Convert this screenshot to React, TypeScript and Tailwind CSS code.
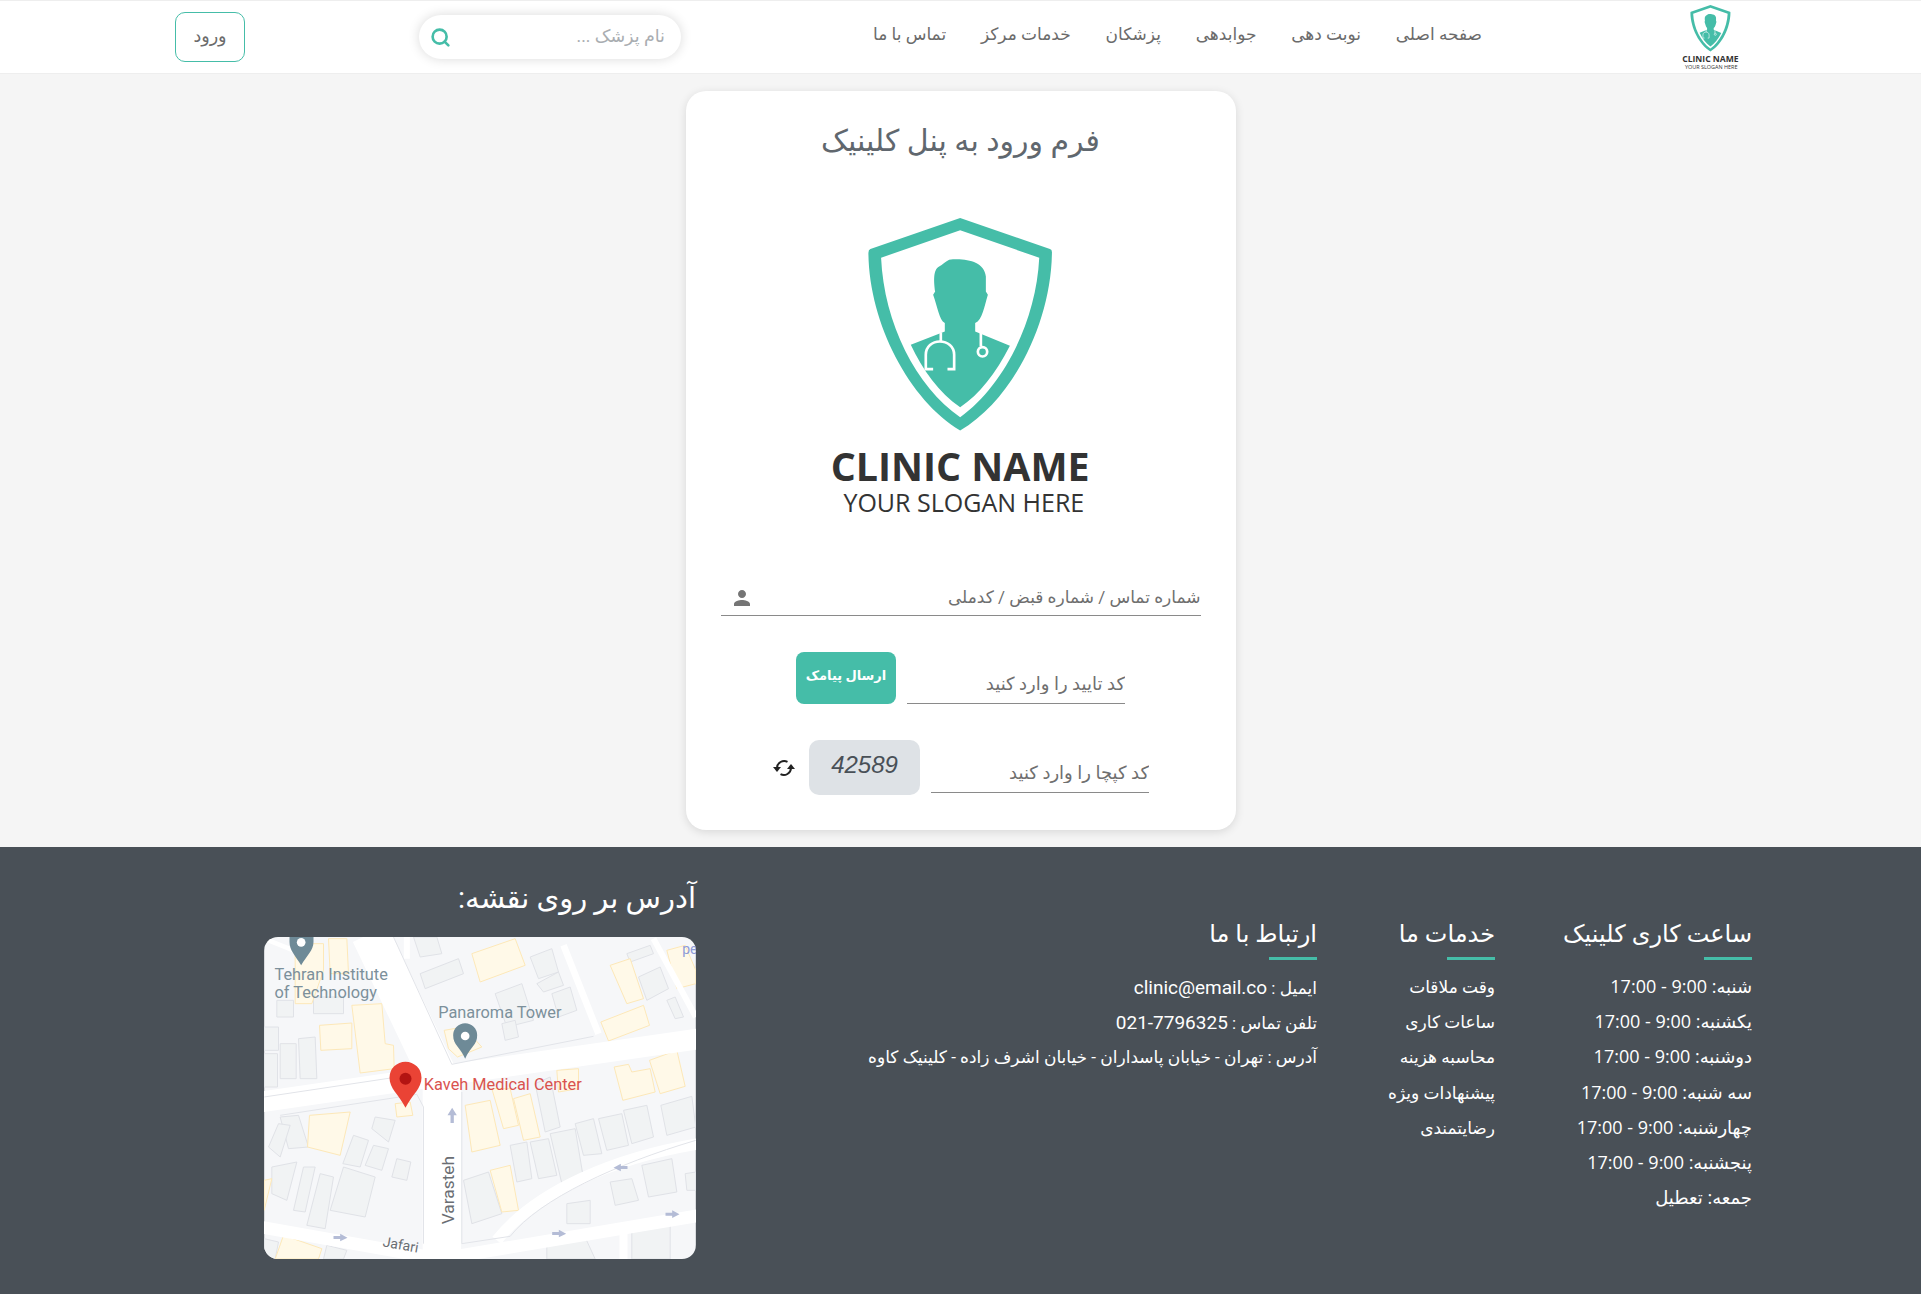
import { Search } from 'lucide-react'

const FONT = "font-['Roboto','DejaVu_Sans',sans-serif]"

const NAV = ['صفحه اصلی', 'نوبت دهی', 'جوابدهی', 'پزشکان', 'خدمات مرکز', 'تماس با ما']

const HOURS = [
  'شنبه: 9:00 - 17:00',
  'یکشنبه: 9:00 - 17:00',
  'دوشنبه: 9:00 - 17:00',
  'سه شنبه: 9:00 - 17:00',
  'چهارشنبه: 9:00 - 17:00',
  'پنجشنبه: 9:00 - 17:00',
  'جمعه: تعطیل',
]

const SERVICES = ['وقت ملاقات', 'ساعات کاری', 'محاسبه هزینه', 'پیشنهادات ویژه', 'رضایتمندی']

function Logo({ className }: { className: string }) {
  return (
    <svg viewBox="129 70 830 920" direction="ltr" className={className}>
      <path
        fillRule="evenodd"
        fill="#45bda8"
        d="M543 85 L812 178 Q819 180 818 190 C815 400 700 630 543 722 C390 630 270 400 268 190 Q268 180 274 178 Z M543 122 L780 204 C770 400 670 590 543 682 C410 590 315 400 306 204 Z"
      />
      <path
        fill="#45bda8"
        d="M395 465 L497 425 L497 400 C480 390 475 350 462 315 L468 305 C465 280 460 240 480 230 C490 225 500 215 510 210 C560 205 615 215 620 260 L620 305 L626 315 C615 350 610 390 588 400 L588 425 L692 468 C650 550 600 615 543 652 C480 610 430 540 395 465 Z"
      />
      <g fill="none" stroke="#fff" strokeWidth="8">
        <path d="M485 428 V455" />
        <path d="M462 538 H440 V495 C440 470 460 455 482 455 C505 455 525 470 525 495 V538 H505" />
        <path d="M605 428 V470" />
        <circle cx="610" cy="486" r="14" />
      </g>
      <text x="543" y="872" textAnchor="middle" fontFamily="Open Sans" fontWeight="700" fontSize="118" fill="#333">
        CLINIC NAME
      </text>
      <text x="554" y="965" textAnchor="middle" fontFamily="Open Sans" fontSize="75" fill="#333">
        YOUR SLOGAN HERE
      </text>
    </svg>
  )
}

const GRAY_BLOCKS = [
  '510,310 625,265 640,310 525,355', '840,260 905,235 925,305 865,325', '860,340 925,305 940,345 880,365',
  '735,370 815,340 850,450 770,470', '905,370 960,350 980,420 925,440', '1165,320 1230,290 1255,355 1190,390',
  '1130,250 1200,225 1210,250 1140,275', '1250,390 1275,380 1300,440 1275,445', '755,460 795,450 805,500 765,510',
  '42,470 85,470 85,540 42,540', '90,520 138,520 138,625 90,625', '145,505 195,500 200,625 150,625', '42,550 82,550 82,650 42,650',
  '80,390 130,390 130,440 80,440', '190,380 280,380 280,430 190,430', '490,200 560,200 575,250 510,260',
  '855,640 900,620 930,770 885,785', '975,760 1030,745 1055,850 1000,855', '1045,745 1115,730 1135,825 1070,840',
  '1120,720 1190,705 1210,800 1145,820', '1232,705 1325,678 1337,770 1250,795', '780,825 830,815 845,925 800,935',
  '840,815 895,805 920,915 865,925', '900,790 975,775 1000,925 935,940', '640,930 715,905 755,1030 665,1060',
  '1080,935 1145,925 1165,990 1095,1005', '1175,885 1265,865 1280,965 1195,980', '950,1000 1020,990 1020,1060 950,1060',
  '90,740 145,735 175,830 115,835', '55,830 85,760 120,765 90,860', '65,890 140,875 110,990 65,970', '130,1020 160,890 195,890 165,1025',
  '170,1065 210,910 250,920 225,1075', '240,1020 280,890 375,920 345,1040', '278,880 310,795 355,810 330,890',
  '345,885 370,825 415,835 395,900', '365,775 375,740 435,750 415,815', '425,920 440,865 482,875 470,930',
  '1145,1065 1260,1055 1260,1166 1145,1166', '890,1110 1000,1090 1035,1166 890,1166', '1305,910 1337,905 1337,960 1310,960',
  '230,1125 290,1140 280,1166 220,1166', '42,1105 85,1115 75,1166 42,1166',
]

const YELLOW_BLOCKS = [
  '665,250 795,205 825,285 690,335', '1080,285 1140,265 1180,385 1130,400', '1052,455 1180,405 1198,465 1075,512',
  '1250,240 1305,225 1337,300 1337,340 1280,355', '235,205 290,205 295,310 240,310', '135,220 220,220 220,300 185,400 135,400',
  '208,465 305,458 305,535 212,540', '305,405 395,400 405,520 430,525 432,595 330,608', '582,480 640,470 695,530 622,560 595,535',
  '920,600 985,595 985,655 925,665', '1092,590 1135,582 1145,605 1200,595 1215,665 1118,690', '1198,570 1280,540 1305,648 1230,670',
  '435,700 480,695 488,735 440,740', '645,705 720,690 750,825 665,845', '725,655 780,655 805,765 760,775',
  '790,685 840,670 870,800 820,810', '720,900 780,885 805,1020 755,1025', '178,735 300,725 270,855 172,830',
  '42,930 65,925 42,1020', '100,1095 215,1135 205,1166 75,1166',
]

function MapImage() {
  return (
    <svg viewBox="42 200 1295 966" direction="ltr" className="block h-full w-full">
      <rect x="42" y="200" width="1295" height="966" fill="#f6f7f9" />
      <g fill="#f1f3f4" stroke="#e0e2e7" strokeWidth="3">
        {GRAY_BLOCKS.map(p => (
          <polygon key={p} points={p} />
        ))}
      </g>
      <g fill="#fff9e8" stroke="#fde8b8" strokeWidth="3">
        {YELLOW_BLOCKS.map(p => (
          <polygon key={p} points={p} />
        ))}
      </g>
      <g fill="none" stroke="#fff" strokeLinecap="butt">
        <path d="M360 190 L575 640 V1180" strokeWidth="115" />
        <path d="M30 695 L480 630 L1350 505" strokeWidth="62" />
        <path d="M30 1070 L570 1166 L1350 1035" strokeWidth="38" />
        <path d="M740 1110 C860 960 1100 860 1350 820" strokeWidth="34" />
        <path d="M940 225 L1045 490" strokeWidth="20" />
        <path d="M470 200 V265" strokeWidth="18" />
        <path d="M1210 205 L1337 440" strokeWidth="18" />
        <path d="M1120 1085 V1166" strokeWidth="24" />
        <path d="M42 205 L130 240" strokeWidth="14" />
      </g>
      <g fill="none" stroke="#e2e4e9" strokeWidth="3">
        <path d="M430 200 L605 582 L1030 498" />
        <path d="M42 680 L455 618" />
        <path d="M90 735 L500 672 L520 710 V1120" />
        <path d="M635 665 V1120 L780 1098 C870 985 1100 880 1337 810" />
      </g>
      <path d="M153 285 C135 255 118 240 118 215 V200 H190 V215 C190 240 170 255 153 285 Z" fill="#6e8a97" />
      <circle cx="153" cy="216" r="13" fill="#fff" />
      <path d="M645 565 C630 530 609 525 609 495 A36 36 0 0 1 681 495 C681 525 660 530 645 565 Z" fill="#6e8a97" />
      <circle cx="645" cy="497" r="13" fill="#fff" />
      <path d="M466 712 C445 670 418 655 418 622 A47 47 0 0 1 514 622 C514 655 487 670 466 712 Z" fill="#ea4335" />
      <circle cx="466" cy="625" r="18" fill="#b31412" />
      <g fontFamily="Roboto" fontSize="49">
        <text x="73" y="329" fill="#7c909b">Tehran Institute</text>
        <text x="73" y="382" fill="#7c909b">of Technology</text>
        <text x="564" y="444" fill="#7c909b">Panaroma Tower</text>
        <text x="521" y="658" fill="#d9534f">Kaveh Medical Center</text>
        <text transform="translate(610 1062) rotate(-90)" fill="#6a6e73" fontSize="52">Varasteh</text>
        <text transform="translate(396 1128) rotate(10)" fill="#6a6e73" fontSize="42">Jafari</text>
        <text x="1296" y="250" fill="#8e9bd8" fontSize="42">pe</text>
      </g>
      <g fill="#b4bcd6">
        <path d="M606 712 L620 735 H611 V758 H601 V735 H592 Z" />
        <path d="M1090 892 L1112 880 V887 H1132 V896 H1112 V903 Z" />
        <path d="M292 1102 L270 1090 V1097 H250 V1106 H270 V1113 Z" />
        <path d="M948 1090 L926 1078 V1085 H906 V1094 H926 V1101 Z" />
        <path d="M1288 1032 L1266 1020 V1027 H1246 V1036 H1266 V1043 Z" />
      </g>
    </svg>
  )
}

function FooterHeading({ title }: { title: string }) {
  return (
    <div className="mb-[10px] w-fit">
      <h3 className="text-[24px] leading-[36px] whitespace-nowrap text-white">{title}</h3>
      <div className="mt-[5px] h-[3px] w-[48px] bg-[#45bda8]" />
    </div>
  )
}

export default function App() {
  return (
    <div dir="rtl" className={`${FONT} min-h-[1294px] bg-[#f5f5f5]`}>
      <header className="flex h-[74px] items-center border-y border-[#eeeeee] bg-white pr-[180px] pl-[175px]">
        <Logo className="h-[67px] w-[61px] shrink-0" />
        <nav className="mr-[198px] flex w-[609px] shrink-0 justify-between pb-[4px] text-[17px] text-[#6b6b6b]">
          {NAV.map(item => (
            <a key={item} className="whitespace-nowrap">
              {item}
            </a>
          ))}
        </nav>
        <div className="mr-[192px] flex h-[44px] w-[262px] items-center justify-between rounded-full bg-white pr-4 pl-[11px] shadow-[0_0_12px_rgba(0,0,0,0.15)]">
          <input placeholder="نام پزشک ..." className="w-[180px] bg-transparent pb-[2px] text-[17.5px] outline-none placeholder:text-[#a9adb1]" />
          <Search className="h-[21px] w-[21px] text-[#45bda8]" strokeWidth={3} />
        </div>
        <button className="mr-auto h-[50px] w-[70px] rounded-[10px] border border-[#45bda8] pb-[2px] text-[17.5px] text-[#6b6b6b]">ورود</button>
      </header>

      <main className="flex h-[773px] justify-center pt-[17px]">
        <div className="h-[739px] w-[550px] rounded-[20px] bg-white px-[35px] shadow-[0_2px_10px_rgba(0,0,0,0.12)]">
          <h1 className="pt-[30px] text-center text-[30px] leading-[40px] text-[#60676e]">فرم ورود به پنل کلینیک</h1>
          <div className="mt-[52px] flex justify-center">
            <Logo className="h-[307px] w-[277px]" />
          </div>
          <div className="mt-[58px] flex h-[38px] items-center border-b border-[#8a8a8a]">
            <input placeholder="شماره تماس / شماره قبض / کدملی" className="h-full flex-1 text-[17px] outline-none placeholder:text-[#6f6f6f]" />
            <svg viewBox="0 0 24 24" className="mt-[3px] ml-[9px] h-[24px] w-[24px] fill-[#757575]">
              <path d="M12 12c2.21 0 4-1.79 4-4s-1.79-4-4-4-4 1.79-4 4 1.79 4 4 4zm0 2c-2.67 0-8 1.34-8 4v2h16v-2c0-2.66-5.33-4-8-4z" />
            </svg>
          </div>
          <div className="mt-[36px] flex items-end justify-center gap-[11px]">
            <input placeholder="کد تایید را وارد کنید" className="h-[40px] w-[218px] border-b border-[#8a8a8a] text-[18px] outline-none placeholder:text-[#6f6f6f]" />
            <button className="h-[52px] w-[100px] rounded-[8px] bg-[#45bda8] pb-[4px] text-[13px] font-bold text-white">ارسال پیامک</button>
          </div>
          <div className="mt-[36px] flex items-center justify-center gap-[11px]">
            <input placeholder="کد کپچا را وارد کنید" className="mt-[10px] h-[40px] w-[218px] border-b border-[#8a8a8a] text-[18px] outline-none placeholder:text-[#6f6f6f]" />
            <div dir="ltr" className="flex h-[55px] w-[111px] items-center justify-center rounded-[10px] bg-[#dee2e6] pb-[6px] font-['Liberation_Sans',sans-serif] text-[24px] text-[#495057] italic">
              42589
            </div>
            <svg viewBox="0 0 24 24" className="mr-[2px] h-[24px] w-[24px] fill-none stroke-[#222] stroke-2">
              <path d="M5 12 A7.2 7.2 0 0 1 15.5 5.8" />
              <path d="M19 12 A7.2 7.2 0 0 1 8.5 18.2" />
              <path d="M1 11 H9 L5 16 Z" className="fill-[#222] stroke-none" />
              <path d="M15 13 H23 L19 8 Z" className="fill-[#222] stroke-none" />
            </svg>
          </div>
        </div>
      </main>

      <footer className="flex h-[447px] bg-[#495057] pr-[169px] text-white">
        <div className="w-[257px] shrink-0 pt-[69px]">
          <FooterHeading title="ساعت کاری کلینیک" />
          <ul className="-mt-px font-['Open_Sans','DejaVu_Sans',sans-serif] text-[18px]">
            {HOURS.map(h => (
              <li key={h} className="h-[35.2px] leading-[35px] whitespace-nowrap">
                {h}
              </li>
            ))}
          </ul>
        </div>
        <div className="w-[178px] shrink-0 pt-[69px]">
          <FooterHeading title="خدمات ما" />
          <ul>
            {SERVICES.map(s => (
              <li key={s} className="h-[35.2px] text-[17px] leading-[35px] whitespace-nowrap">
                {s}
              </li>
            ))}
          </ul>
        </div>
        <div className="w-[621px] shrink-0 pt-[69px]">
          <FooterHeading title="ارتباط با ما" />
          <ul className="text-[17px] leading-[35px] whitespace-nowrap">
            <li className="h-[35.2px]">
              ایمیل : <span dir="ltr" className="text-[19px]">clinic@email.co</span>
            </li>
            <li className="h-[35.2px]">
              تلفن تماس : <span dir="ltr" className="text-[19px]">021-7796325</span>
            </li>
            <li className="h-[35.2px]">آدرس : تهران - خیابان پاسداران - خیابان اشرف زاده - کلینیک کاوه</li>
          </ul>
        </div>
        <div className="w-[432px] shrink-0 pt-[31px]">
          <h2 className="text-[29px] leading-[40px] whitespace-nowrap">آدرس بر روی نقشه:</h2>
          <div className="mt-[19px] h-[322px] w-[432px] overflow-hidden rounded-[14px]">
            <MapImage />
          </div>
        </div>
      </footer>
    </div>
  )
}
